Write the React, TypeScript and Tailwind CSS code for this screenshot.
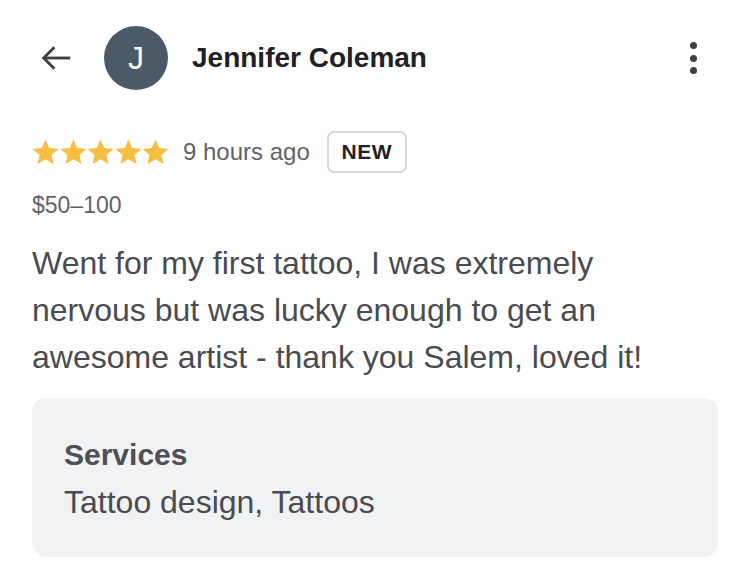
import { FC } from "react"

const Star: FC = () => (
  <svg width="27" height="26" viewBox="1.6 1.8 20.8 20" fill="#f4bf42">
    <path d="M12 2.2l2.9 6.6 7.1.6-5.4 4.7 1.6 7-6.2-3.7-6.2 3.7 1.6-7L2 9.4l7.1-.6z" />
  </svg>
)

const App: FC = () => {
  return (
    <div className="w-[750px] h-[575px] bg-white font-['Liberation_Sans',Arial,sans-serif] px-8 pt-[26px]">
      <div className="flex items-center h-[64px]">
        <svg className="ml-[5px]" width="38" height="38" viewBox="0 0 24 24" fill="none" stroke="#3c4043" strokeWidth="1.8">
          <path d="M21 12H4.5" />
          <path d="M11 5.2L4.2 12l6.8 6.8" />
        </svg>
        <div className="ml-[29px] w-16 h-16 rounded-full bg-[#4b5a66] flex items-center justify-center text-white text-[32px] font-light">
          J
        </div>
        <p className="ml-6 text-[28px] font-bold text-[#202124]">Jennifer Coleman</p>
        <div className="ml-auto mr-[21px] flex flex-col gap-[5.5px]">
          <span className="w-[7px] h-[7px] rounded-full bg-[#3c4043]" />
          <span className="w-[7px] h-[7px] rounded-full bg-[#3c4043]" />
          <span className="w-[7px] h-[7px] rounded-full bg-[#3c4043]" />
        </div>
      </div>

      <div className="flex items-center mt-[41px] h-[42px]">
        <div className="flex gap-[0.5px]">
          <Star />
          <Star />
          <Star />
          <Star />
          <Star />
        </div>
        <p className="ml-[14px] text-[24px] text-[#5f6368]">9 hours ago</p>
        <div className="ml-[17px] h-[42px] w-[80px] border-2 border-[#d9d9d9] rounded-[7px] flex items-center justify-center text-[21px] font-bold tracking-[0.5px] text-[#202124]">
          NEW
        </div>
      </div>

      <p className="mt-[18px] text-[23px] leading-[28px] text-[#5f6368]">$50–100</p>

      <p className="mt-[21px] text-[32px] leading-[47px] text-[#4a4b50] w-[660px]">
        Went for my first tattoo, I was extremely nervous but was lucky enough to get an awesome artist - thank you Salem, loved it!
      </p>

      <div className="mt-[17px] w-[686px] h-[159px] rounded-[14px] bg-[#f1f2f4] px-8 pt-[39px]">
        <p className="text-[30px] font-semibold text-[#4f5055] leading-[36px]">Services</p>
        <p className="mt-[11px] text-[32px] text-[#4a4b50] leading-[36px]">Tattoo design, Tattoos</p>
      </div>
    </div>
  )
}

export default App
